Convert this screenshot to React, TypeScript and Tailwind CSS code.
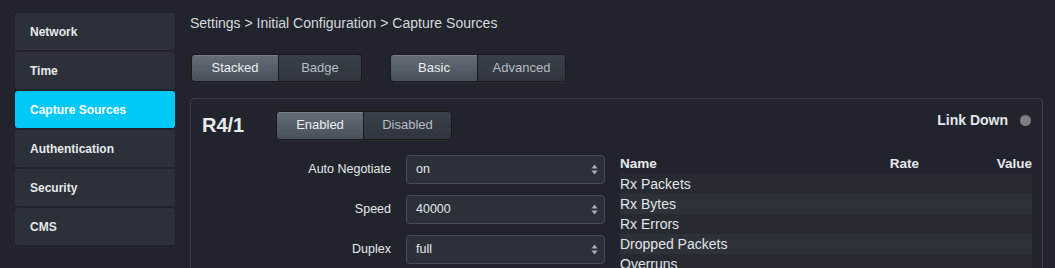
import React from 'react';

const navItems = ['Network', 'Time', 'Capture Sources', 'Authentication', 'Security', 'CMS'];

const stats = ['Rx Packets', 'Rx Bytes', 'Rx Errors', 'Dropped Packets', 'Overruns'];

const fields = [
  { label: 'Auto Negotiate', value: 'on' },
  { label: 'Speed', value: '40000' },
  { label: 'Duplex', value: 'full' },
];

const Segmented: React.FC<{ items: [string, number][]; active: number; h?: string }> = ({ items, active, h = 'h-[28px]' }) => (
  <div className={`flex ${h} rounded-[4px] border border-[#17191d] overflow-hidden shadow-[0_1px_0_rgba(255,255,255,0.04)]`}>
    {items.map(([label, w], i) => (
      <div
        key={label}
        style={{ width: w }}
        className={`flex items-center justify-center text-[13px] ${i > 0 ? 'border-l border-[#17191d]' : ''} ${
          i === active
            ? 'bg-gradient-to-b from-[#646d78] to-[#48505a] text-[#eceef1] shadow-[inset_0_1px_0_rgba(255,255,255,0.12)]'
            : 'bg-gradient-to-b from-[#3a404a] to-[#30353d] text-[#b7bcc4]'
        }`}
      >
        {label}
      </div>
    ))}
  </div>
);

const SelectArrows = () => (
  <svg width="7" height="11" viewBox="0 0 7 11" className="text-[#a9aeb6]">
    <path d="M3.5 0.5 L6.5 4.5 H0.5 Z" fill="currentColor" />
    <path d="M3.5 10.5 L6.5 6.5 H0.5 Z" fill="currentColor" />
  </svg>
);

export default function App() {
  return (
    <div
      className="w-[1055px] h-[268px] overflow-hidden bg-[#21242c] flex text-[#e3e6ea]"
      style={{ fontFamily: '"Liberation Sans", Arial, sans-serif' }}
    >
      {/* sidebar */}
      <div className="w-[175px] pl-[15px] pt-[13px] flex flex-col gap-[2px] shrink-0">
        {navItems.map((item) => (
          <div
            key={item}
            className={`h-[37px] rounded-[3px] flex items-center pl-[15px] text-[12px] font-bold ${
              item === 'Capture Sources' ? 'bg-[#00c9fa] text-white' : 'bg-[#2c3139] text-[#e6e8eb]'
            }`}
          >
            {item}
          </div>
        ))}
      </div>

      {/* main */}
      <div className="ml-[15px] flex-1 pr-[12px]">
        <div className="h-[54px] pt-[13px] text-[14px] text-[#d5d8dd]">
          Settings &gt; Initial Configuration &gt; Capture Sources
        </div>
        <div className="flex gap-[28px] pl-[1px] h-[44px]">
          <Segmented items={[['Stacked', 86], ['Badge', 83]]} active={0} />
          <Segmented items={[['Basic', 86], ['Advanced', 88]]} active={0} />
        </div>

        <div className="border border-[#3b3f47] rounded-[4px] h-[200px]">
          <div className="flex items-center pt-[11px] pl-[11px] pr-[11px]">
            <div className="w-[74px] text-[20px] font-bold text-[#e9ebee]">R4/1</div>
            <Segmented items={[['Enabled', 86], ['Disabled', 88]]} active={0} h="h-[29px]" />
            <div className="flex-1" />
            <div className="self-start flex items-center gap-[12px]">
              <span className="text-[14px] font-bold text-[#e3e6ea]">Link Down</span>
              <span className="w-[11px] h-[11px] rounded-full bg-[#7d7f83]" />
            </div>
          </div>

          <div className="flex mt-[15px]">
            <div className="flex flex-col gap-[11px]">
              {fields.map((f) => (
                <div key={f.label} className="flex items-center">
                  <div className="w-[200px] text-right text-[12.5px] text-[#e6e8eb]">{f.label}</div>
                  <div className="ml-[15px] w-[199px] h-[29px] rounded-[4px] border border-[#474c55] bg-[#2c3139] flex items-center justify-between pl-[9px] pr-[6px] text-[12.5px] text-[#e3e6ea]">
                    <span>{f.value}</span>
                    <SelectArrows />
                  </div>
                </div>
              ))}
            </div>

            <div className="ml-[15px] w-[412px]">
              <div className="h-[19px] flex items-end text-[13.5px] font-bold text-[#e6e8eb]">
                <span className="flex-1">Name</span>
                <span className="w-[107px]">Rate</span>
                <span>Value</span>
              </div>
              {stats.map((s, i) => (
                <div
                  key={s}
                  className={`h-[20px] flex items-center text-[14px] text-[#e1e4e8] ${
                    i % 2 === 0 ? 'bg-[#272a31]' : 'bg-[#2d3239]'
                  }`}
                >
                  {s}
                </div>
              ))}
            </div>
          </div>
        </div>
      </div>
    </div>
  );
}
